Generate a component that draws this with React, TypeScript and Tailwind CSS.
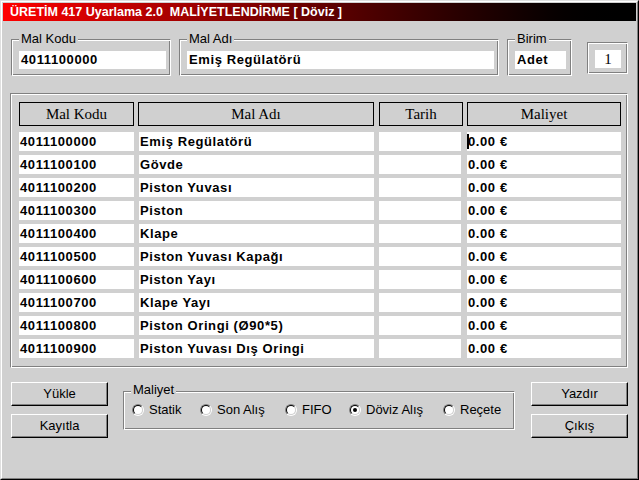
import type { ReactNode } from "react";

const rows: [string, string][] = [
  ["4011100000", "Emiş Regülatörü"],
  ["4011100100", "Gövde"],
  ["4011100200", "Piston Yuvası"],
  ["4011100300", "Piston"],
  ["4011100400", "Klape"],
  ["4011100500", "Piston Yuvası Kapağı"],
  ["4011100600", "Piston Yayı"],
  ["4011100700", "Klape Yayı"],
  ["4011100800", "Piston Oringi (Ø90*5)"],
  ["4011100900", "Piston Yuvası Dış Oringi"],
];

const etched =
  "border border-t-[#808080] border-l-[#808080] border-r-white border-b-white shadow-[inset_1px_1px_0_#fff,inset_-1px_-1px_0_#808080]";

const raised =
  "border border-t-white border-l-white border-r-black border-b-black shadow-[inset_-1px_-1px_0_#808080]";

function GroupBox({
  label,
  className,
  children,
}: {
  label: string;
  className: string;
  children?: ReactNode;
}) {
  return (
    <div className={`relative ${etched} ${className}`}>
      <span className="absolute -top-[9px] left-[7px] px-[2px] bg-[#d0d0d0] text-[13px] leading-[15px] text-black">
        {label}
      </span>
      {children}
    </div>
  );
}

function Field({ value, className }: { value: string; className: string }) {
  return (
    <div
      className={`h-[18px] bg-white flex items-center pl-[2px] text-[13px] font-bold tracking-[0.6px] text-black ${className}`}
    >
      {value}
    </div>
  );
}

function Button({ label }: { label: string }) {
  return (
    <button
      className={`w-[97px] h-[24px] ${raised} bg-[#d0d0d0] text-[13px] text-black flex items-center justify-center`}
    >
      {label}
    </button>
  );
}

function Radio({ label, checked, width }: { label: string; checked?: boolean; width: string }) {
  return (
    <div className={`flex items-center ${width}`}>
      <div className="w-[12px] h-[12px] rounded-full border border-t-[#808080] border-l-[#808080] border-r-white border-b-white">
        <div className="w-full h-full rounded-full border border-t-black border-l-black border-r-[#d0d0d0] border-b-[#d0d0d0] bg-white flex items-center justify-center">
          {checked && <div className="w-[4px] h-[4px] rounded-full bg-black" />}
        </div>
      </div>
      <span className="ml-[5px] text-[13px] text-black">{label}</span>
    </div>
  );
}

export default function App() {
  return (
    <div className="w-[639px] h-[480px] border border-t-[#dfdfdf] border-l-[#dfdfdf] border-r-black border-b-black font-['Liberation_Sans',Arial,sans-serif] select-none">
      <div className="w-full h-full border border-t-white border-l-white border-r-[#808080] border-b-[#808080] bg-[#d0d0d0] p-[1px] flex flex-col">
        {/* Title bar */}
        <div className="h-[18px] bg-linear-to-r from-[#ff0000] to-black flex items-center pl-[7px] text-white text-[12.5px] font-bold whitespace-pre">
          ÜRETİM 417 Uyarlama 2.0  MALİYETLENDİRME [ Döviz ]
        </div>

        {/* Header fields */}
        <div className="flex items-start mt-[18px] pl-[8px]">
          <GroupBox label="Mal Kodu" className="w-[160px] h-[37px] pt-[11px] pl-[7px]">
            <Field value="4011100000" className="w-[147px]" />
          </GroupBox>
          <GroupBox label="Mal Adı" className="ml-[8px] w-[320px] h-[37px] pt-[11px] pl-[7px]">
            <Field value="Emiş Regülatörü" className="w-[307px]" />
          </GroupBox>
          <GroupBox label="Birim" className="ml-[8px] w-[65px] h-[37px] pt-[11px] pl-[7px]">
            <Field value="Adet" className="w-[51px]" />
          </GroupBox>
          <div className={`ml-[15px] mt-[3px] w-[41px] h-[32px] ${etched} pt-[7px] pl-[7px]`}>
            <div className="w-[26px] h-[18px] bg-white flex items-center justify-center font-['Liberation_Serif',serif] text-[15px] text-black">
              1
            </div>
          </div>
        </div>

        {/* Cost grid */}
        <div className={`mt-[17px] ml-[7px] w-[618px] h-[275px] ${etched} pt-[8px] pl-[8px]`}>
          <div className="flex h-[24px] font-['Liberation_Serif',serif] text-[15px] text-black">
            <div className="w-[115px] border border-black flex items-center justify-center">Mal Kodu</div>
            <div className="ml-[4px] w-[236px] border border-black flex items-center justify-center">Mal Adı</div>
            <div className="ml-[5px] w-[84px] border border-black flex items-center justify-center">Tarih</div>
            <div className="ml-[4px] w-[154px] border border-black flex items-center justify-center">Maliyet</div>
          </div>
          <div className="mt-[6px] flex flex-col gap-[4px] text-[13px] font-bold tracking-[0.6px] text-black">
            {rows.map(([code, name], i) => (
              <div key={code} className="flex h-[19px]">
                <div className="w-[115px] bg-white flex items-center pl-[1px]">{code}</div>
                <div className="ml-[5px] w-[235px] bg-white flex items-center pl-[1px]">{name}</div>
                <div className="ml-[5px] w-[82px] bg-white" />
                <div className="relative ml-[6px] w-[154px] bg-white flex items-center pl-[1px]">
                  {i === 0 && <span className="absolute left-0 top-[2px] w-[2px] h-[15px] bg-black" />}
                  0.00 €
                </div>
              </div>
            ))}
          </div>
        </div>

        {/* Bottom controls */}
        <div className="flex items-start mt-[14px] pl-[8px]">
          <div className="flex flex-col gap-[8px]">
            <Button label="Yükle" />
            <Button label="Kayıtla" />
          </div>
          <div className={`relative ml-[15px] mt-[9px] w-[392px] h-[39px] ${etched} flex items-center pl-[8px] pb-[1px]`}>
            <span className="absolute -top-[10px] left-[7px] px-[2px] bg-[#d0d0d0] text-[13px] leading-[15px] text-black">
              Maliyet
            </span>
            <Radio label="Statik" width="w-[68px]" />
            <Radio label="Son Alış" width="w-[85px]" />
            <Radio label="FIFO" width="w-[64px]" />
            <Radio label="Döviz Alış" width="w-[94px]" checked />
            <Radio label="Reçete" width="w-[70px]" />
          </div>
          <div className="ml-[16px] flex flex-col gap-[8px]">
            <Button label="Yazdır" />
            <Button label="Çıkış" />
          </div>
        </div>
      </div>
    </div>
  );
}
